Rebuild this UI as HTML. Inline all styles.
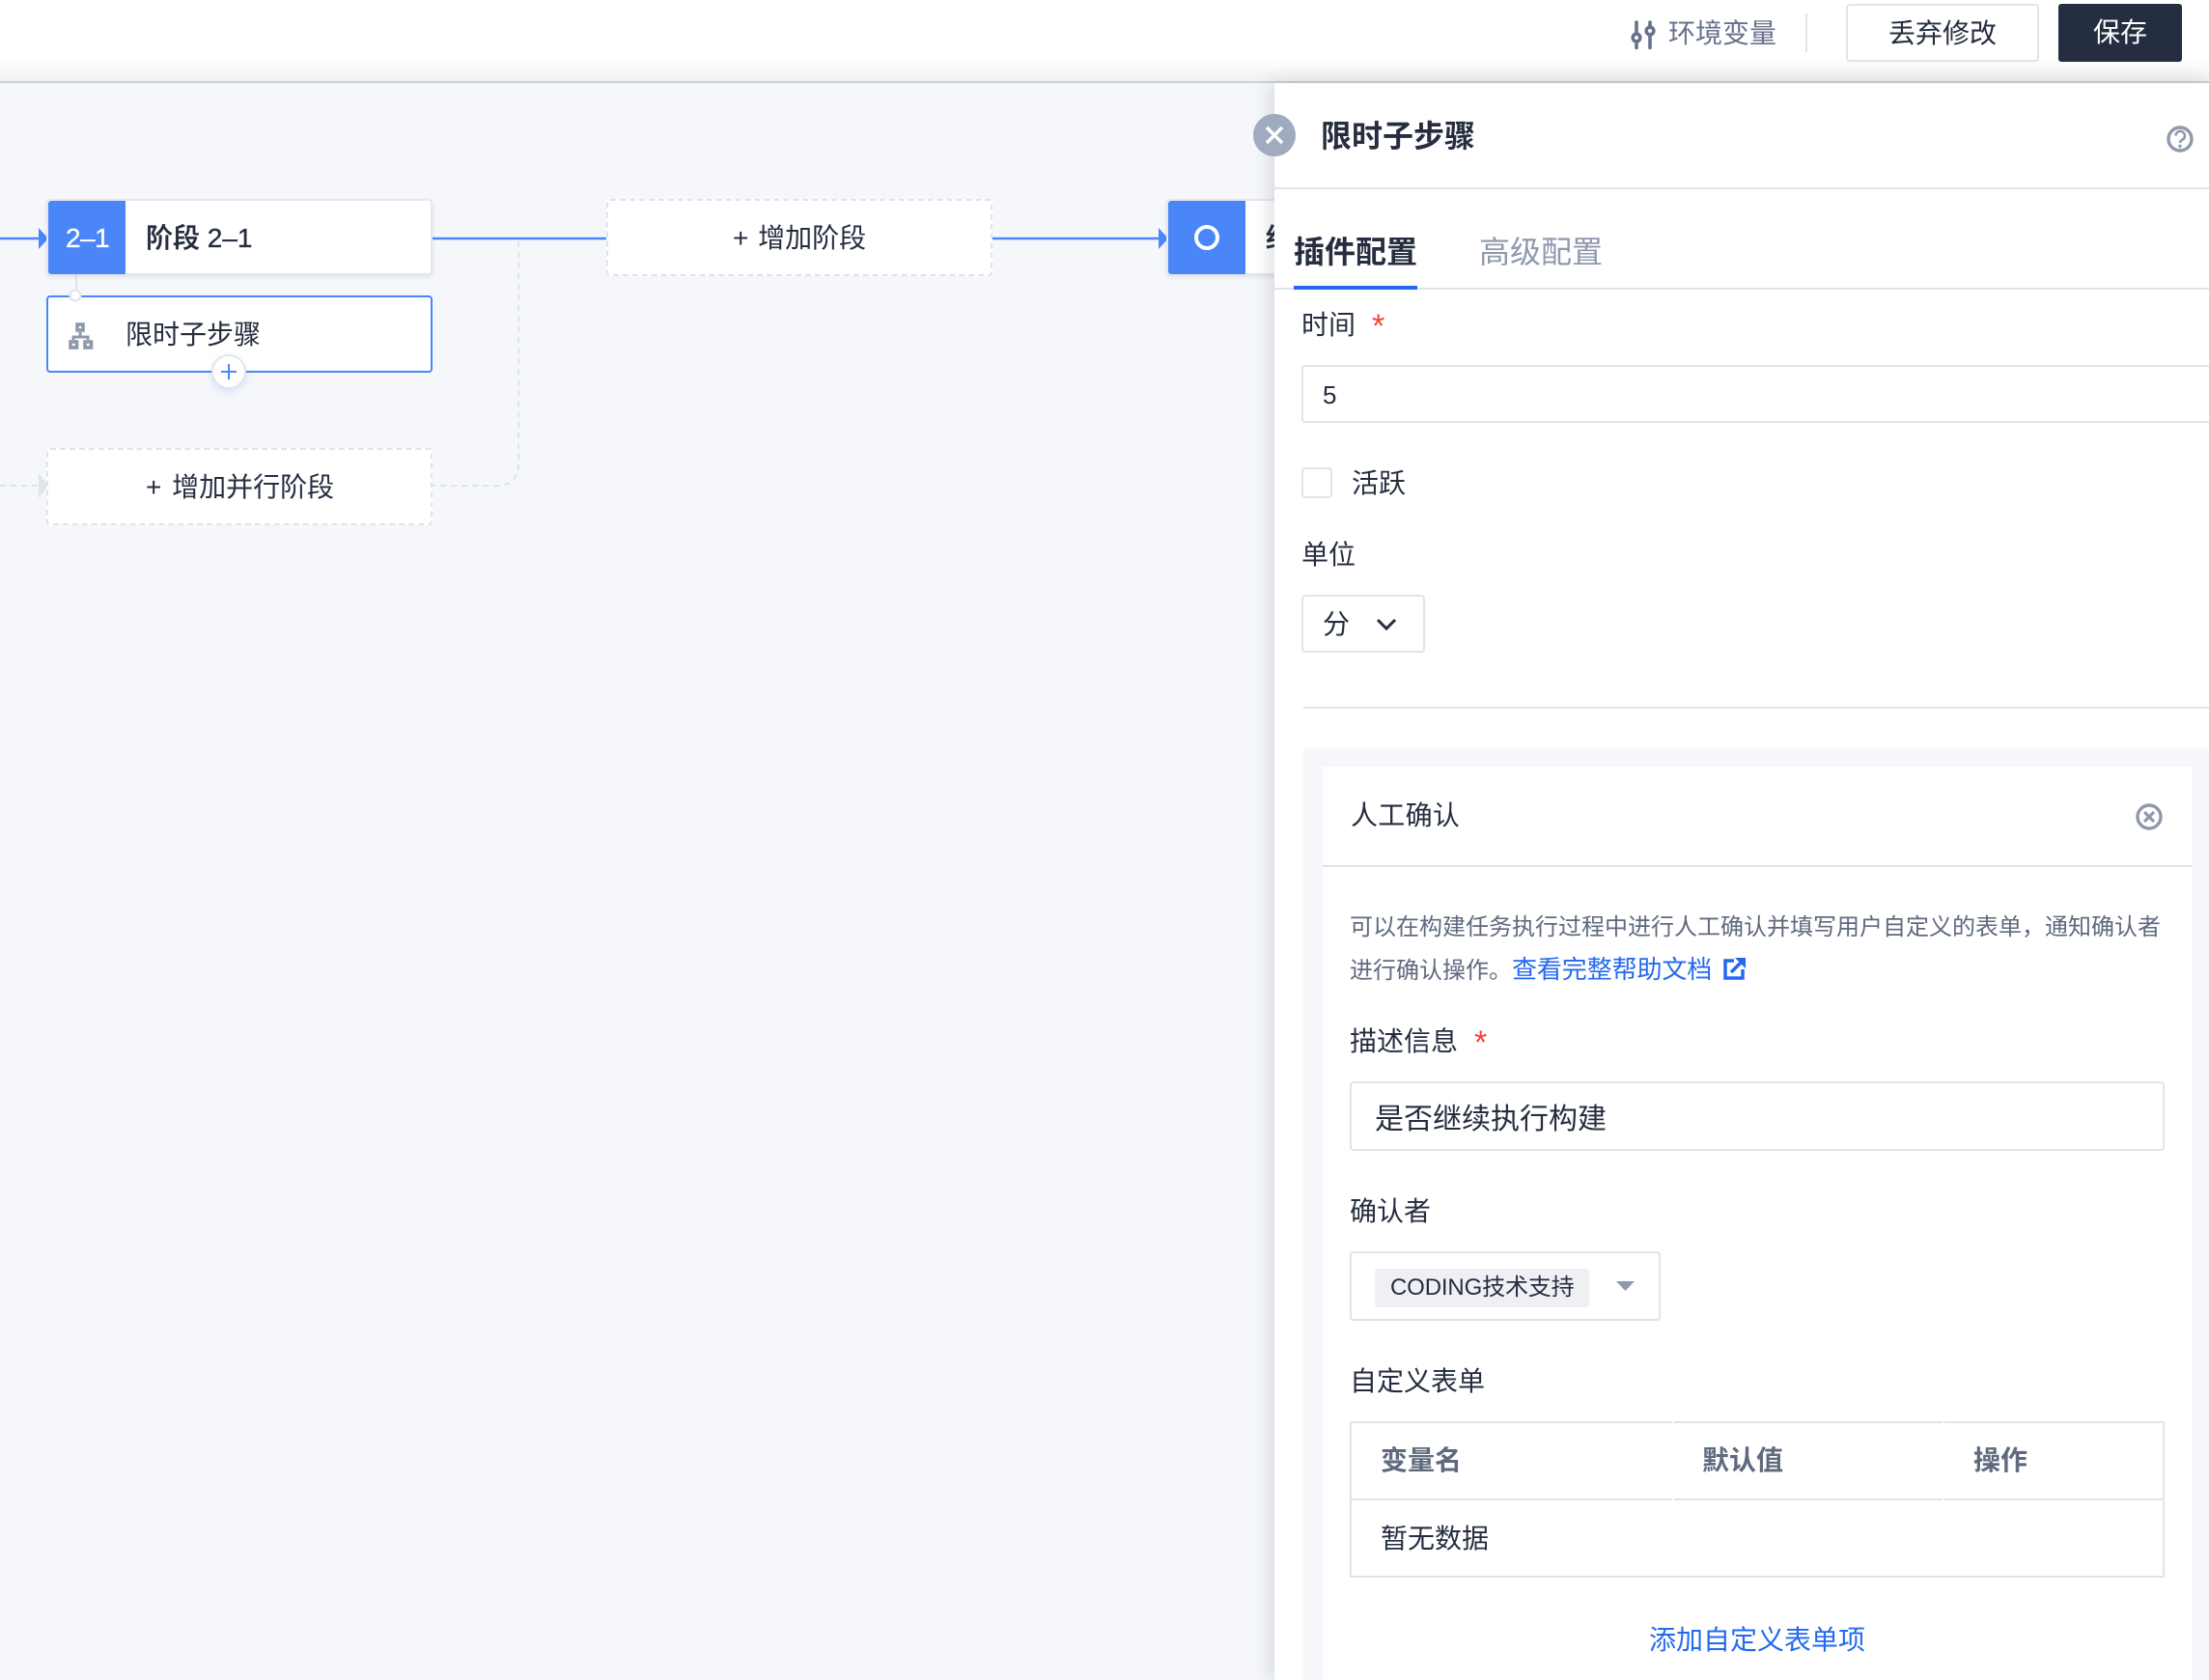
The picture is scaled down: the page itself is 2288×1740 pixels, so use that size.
<!DOCTYPE html>
<html lang="zh-CN">
<head>
<meta charset="utf-8">
<style>
html,body{margin:0;padding:0}
body{width:2288px;height:1740px;overflow:hidden;position:relative;background:#f5f7fb;font-family:"Liberation Sans","Noto Sans CJK SC",sans-serif;color:#252d3f}
.a{position:absolute;box-sizing:border-box}
.t{position:absolute;white-space:nowrap;font-size:28px;line-height:40px;height:40px}
.m{font-weight:500;-webkit-text-stroke:.35px currentColor}
.b{font-weight:700}
.g{border:2px solid #dfe3ea;border-radius:4px;background:#fff}
.d{border:2px dashed #dfe3ea;border-radius:4px;background:#fff}
svg{position:absolute;left:0;top:0}
</style>
</head>
<body>
<!-- header -->
<div class="a" style="left:0;top:0;width:2288px;height:86px;background:linear-gradient(#fff 0,#fff 60px,#f1f2f4 84px);border-bottom:2px solid #cdd1d8"></div>

<!-- pipeline canvas -->
<svg width="2288" height="1740" viewBox="0 0 2288 1740" fill="none">
<path d="M0 247H42M448 247H628M1028 247H1200" stroke="#4b87f8" stroke-width="2.5"/>
<path d="M40 236L50 247L40 258Z M1200 236L1210 247L1200 258Z" fill="#4b87f8"/>
<path d="M537 250V480Q537 503 514 503H448M0 503H40" stroke="#dfe3ea" stroke-width="2" stroke-dasharray="6 5"/>
<path d="M40 490L50 503L40 516Z" fill="#dfe3ea"/>
<path d="M79 285V306" stroke="#dfe3ea" stroke-width="2"/>
</svg>

<div class="a" style="left:48px;top:206px;width:400px;height:79px;background:#fff;border:2px solid #e4e7ed;border-radius:4px;box-shadow:0 2px 4px rgba(40,50,70,.1)"></div>
<div class="a" style="left:50px;top:208px;width:80px;height:76px;background:#4a86f8;border-radius:3px 0 0 3px"></div>
<div class="t" style="left:68px;top:227px;color:#fff;-webkit-text-stroke:.3px #fff;letter-spacing:-.5px">2–1</div>
<div class="t m" style="left:151px;top:227px">阶段 2–1</div>

<div class="a" style="left:48px;top:306px;width:400px;height:80px;background:#fff;border:2px solid #4a86f8;border-radius:4px"></div>
<div class="t" style="left:130px;top:327px">限时子步骤</div>
<svg width="2288" height="1740" viewBox="0 0 2288 1740" fill="none">
<circle cx="78" cy="306" r="5.5" fill="#fff" stroke="#dfe3ea" stroke-width="2"/>
<g stroke="#8f99ad">
<rect x="80" y="336" width="6" height="6" stroke-width="3.600"/>
<rect x="73" y="354" width="6.500" height="6" stroke-width="3.600"/>
<rect x="88" y="354" width="6.500" height="6" stroke-width="3.600"/>
<path d="M83 344V349M76 352V349H91V352" stroke-width="3"/>
</g>
</svg>
<div class="a" style="left:219px;top:367px;width:36px;height:36px;border-radius:50%;background:#fff;border:2px solid #e2e5eb;box-shadow:0 3px 8px rgba(74,134,248,.18)"></div>
<svg width="2288" height="1740" viewBox="0 0 2288 1740" fill="none">
<path d="M229 385H245M237 377V393" stroke="#4a86f8" stroke-width="2"/>
</svg>

<div class="a d" style="left:48px;top:464px;width:400px;height:80px"></div>
<div class="t" style="left:151px;top:485px;word-spacing:3px">+ 增加并行阶段</div>

<div class="a d" style="left:628px;top:206px;width:400px;height:80px"></div>
<div class="t" style="left:759px;top:227px;word-spacing:2px">+ 增加阶段</div>

<div class="a" style="left:1208px;top:206px;width:140px;height:79px;background:#fff;border:2px solid #e4e7ed;border-radius:4px;box-shadow:0 2px 4px rgba(40,50,70,.1)"></div>
<div class="a" style="left:1210px;top:208px;width:80px;height:76px;background:#4a86f8;border-radius:3px 0 0 3px"></div>
<div class="a" style="left:1237px;top:233px;width:26px;height:26px;border:4px solid #fff;border-radius:50%"></div>
<div class="t m" style="left:1311px;top:227px">结束</div>

<!-- side panel -->
<div class="a" style="left:1320px;top:86px;width:968px;height:1654px;background:#fff;box-shadow:-4px 0 18px rgba(40,50,70,.16)"></div>
<div class="a" style="left:1298px;top:118px;width:44px;height:44px;border-radius:50%;background:#a0abc0"></div>
<svg width="2288" height="1740" viewBox="0 0 2288 1740" fill="none">
<path d="M1312 132L1328 148M1328 132L1312 148" stroke="#fff" stroke-width="3.4"/>
</svg>
<div class="t b" style="left:1368px;top:121px;font-size:32px">限时子步骤</div>
<div class="a" style="left:1320px;top:194px;width:968px;height:2px;background:#dfe3ea"></div>
<svg width="2288" height="1740" viewBox="0 0 2288 1740" fill="none">
<circle cx="2258" cy="144" r="12" stroke="#8f99ad" stroke-width="3.400"/>
<path d="M2253.500 140.500a4.700 4.700 0 1 1 7 4.200q-2.500 1.300-2.500 3.300" stroke="#8f99ad" stroke-width="2.600"/>
<circle cx="2258" cy="151.500" r="1.700" fill="#8f99ad"/>
</svg>

<div class="a" style="left:1320px;top:298px;width:968px;height:2px;background:#dfe3ea"></div>
<div class="a" style="left:1340px;top:296px;width:128px;height:4px;background:#2369f0"></div>
<div class="t b" style="left:1340px;top:241px;font-size:32px">插件配置</div>
<div class="t" style="left:1532px;top:241px;font-size:32px;color:#8f99ad">高级配置</div>

<div class="t" style="left:1348px;top:317px">时间</div>
<div class="t" style="left:1421px;top:318px;color:#f0433a;font-size:34px">*</div>
<div class="a g" style="left:1348px;top:378px;width:960px;height:60px"></div>
<div class="t" style="left:1370px;top:389px;font-size:26px">5</div>

<div class="a g" style="left:1348px;top:484px;width:32px;height:32px"></div>
<div class="t" style="left:1400px;top:481px">活跃</div>

<div class="t" style="left:1348px;top:555px">单位</div>
<div class="a g" style="left:1348px;top:616px;width:128px;height:60px"></div>
<div class="t" style="left:1370px;top:627px">分</div>
<svg width="2288" height="1740" viewBox="0 0 2288 1740" fill="none">
<path d="M1427 642L1436 651L1445 642" stroke="#252d3f" stroke-width="3"/>
</svg>

<div class="a" style="left:1350px;top:732px;width:938px;height:2px;background:#dfe3ea"></div>

<!-- plugin card -->
<div class="a" style="left:1350px;top:774px;width:938px;height:966px;background:#f5f7fb"></div>
<div class="a" style="left:1370px;top:794px;width:900px;height:946px;background:#fff"></div>
<div class="t" style="left:1399px;top:825px;letter-spacing:.3px">人工确认</div>
<svg width="2288" height="1740" viewBox="0 0 2288 1740" fill="none">
<circle cx="2226" cy="846" r="12" stroke="#8f99ad" stroke-width="3.400"/>
<path d="M2221 841L2231 851M2231 841L2221 851" stroke="#8f99ad" stroke-width="3.200"/>
</svg>
<div class="a" style="left:1370px;top:896px;width:900px;height:2px;background:#dfe3ea"></div>

<div class="t" style="left:1398px;top:941px;font-size:24px;color:#5f6a7e">可以在构建任务执行过程中进行人工确认并填写用户自定义的表单，通知确认者</div>
<div class="t" style="left:1398px;top:984px;font-size:24px;color:#5f6a7e">进行确认操作。<span style="color:#2369f0;font-size:26px;letter-spacing:-.1px">查看完整帮助文档</span></div>
<svg width="2288" height="1740" viewBox="0 0 2288 1740" fill="none">
<path d="M1796 995H1787V1013H1805V1004" stroke="#2369f0" stroke-width="3.500"/>
<path d="M1793 1007L1803 997" stroke="#2369f0" stroke-width="3.500"/>
<path d="M1797 992H1808V1003Z" fill="#2369f0"/>
</svg>

<div class="t" style="left:1398px;top:1059px">描述信息</div>
<div class="t" style="left:1527px;top:1060px;color:#f0433a;font-size:34px">*</div>
<div class="a g" style="left:1398px;top:1120px;width:844px;height:72px"></div>
<div class="t" style="left:1424px;top:1140px;font-size:30px">是否继续执行构建</div>

<div class="t" style="left:1398px;top:1235px">确认者</div>
<div class="a g" style="left:1398px;top:1296px;width:322px;height:72px"></div>
<div class="a" style="left:1424px;top:1314px;width:222px;height:40px;background:#eef0f4;border-radius:3px"></div>
<div class="t" style="left:1440px;top:1314px;font-size:24px;letter-spacing:-.15px">CODING技术支持</div>
<svg width="2288" height="1740" viewBox="0 0 2288 1740" fill="none">
<path d="M1674 1327H1693L1683.500 1337Z" fill="#8f99ad"/>
</svg>

<div class="t" style="left:1398px;top:1411px">自定义表单</div>

<div class="a" style="left:1398px;top:1472px;width:844px;height:162px;border:2px solid #dfe3ea"></div>
<div class="a" style="left:1398px;top:1552px;width:844px;height:2px;background:#dfe3ea"></div>
<div class="a" style="left:1732px;top:1472px;width:2px;height:2px;background:#fff"></div>
<div class="a" style="left:2012px;top:1472px;width:2px;height:2px;background:#fff"></div>
<div class="a" style="left:1732px;top:1552px;width:2px;height:2px;background:#fff"></div>
<div class="a" style="left:2012px;top:1552px;width:2px;height:2px;background:#fff"></div>
<div class="t b" style="left:1430px;top:1493px;color:#5f6a7e">变量名</div>
<div class="t b" style="left:1763px;top:1493px;color:#5f6a7e">默认值</div>
<div class="t b" style="left:2044px;top:1493px;color:#5f6a7e">操作</div>
<div class="t" style="left:1430px;top:1574px">暂无数据</div>

<div class="t" style="left:1708px;top:1679px;color:#2369f0">添加自定义表单项</div>

<!-- header actions -->
<svg width="2288" height="1740" viewBox="0 0 2288 1740" fill="none">
<g stroke="#67728a" stroke-width="3.600">
<path d="M1695 23V35M1695 43V49.500M1709 23V28M1709 36V49.500" stroke-linecap="round"/>
<circle cx="1695" cy="39" r="3.800"/>
<circle cx="1709" cy="32" r="3.800"/>
</g>
</svg>
<div class="t" style="left:1728px;top:15px;color:#67728a">环境变量</div>
<div class="a" style="left:1870px;top:14px;width:2px;height:40px;background:#dfe3ea"></div>
<div class="a g" style="left:1912px;top:4px;width:200px;height:60px"></div>
<div class="t" style="left:1956px;top:15px">丢弃修改</div>
<div class="a" style="left:2132px;top:4px;width:128px;height:60px;background:#252d40;border-radius:3px"></div>
<div class="t" style="left:2168px;top:14px;color:#fff">保存</div>
</body>
</html>
